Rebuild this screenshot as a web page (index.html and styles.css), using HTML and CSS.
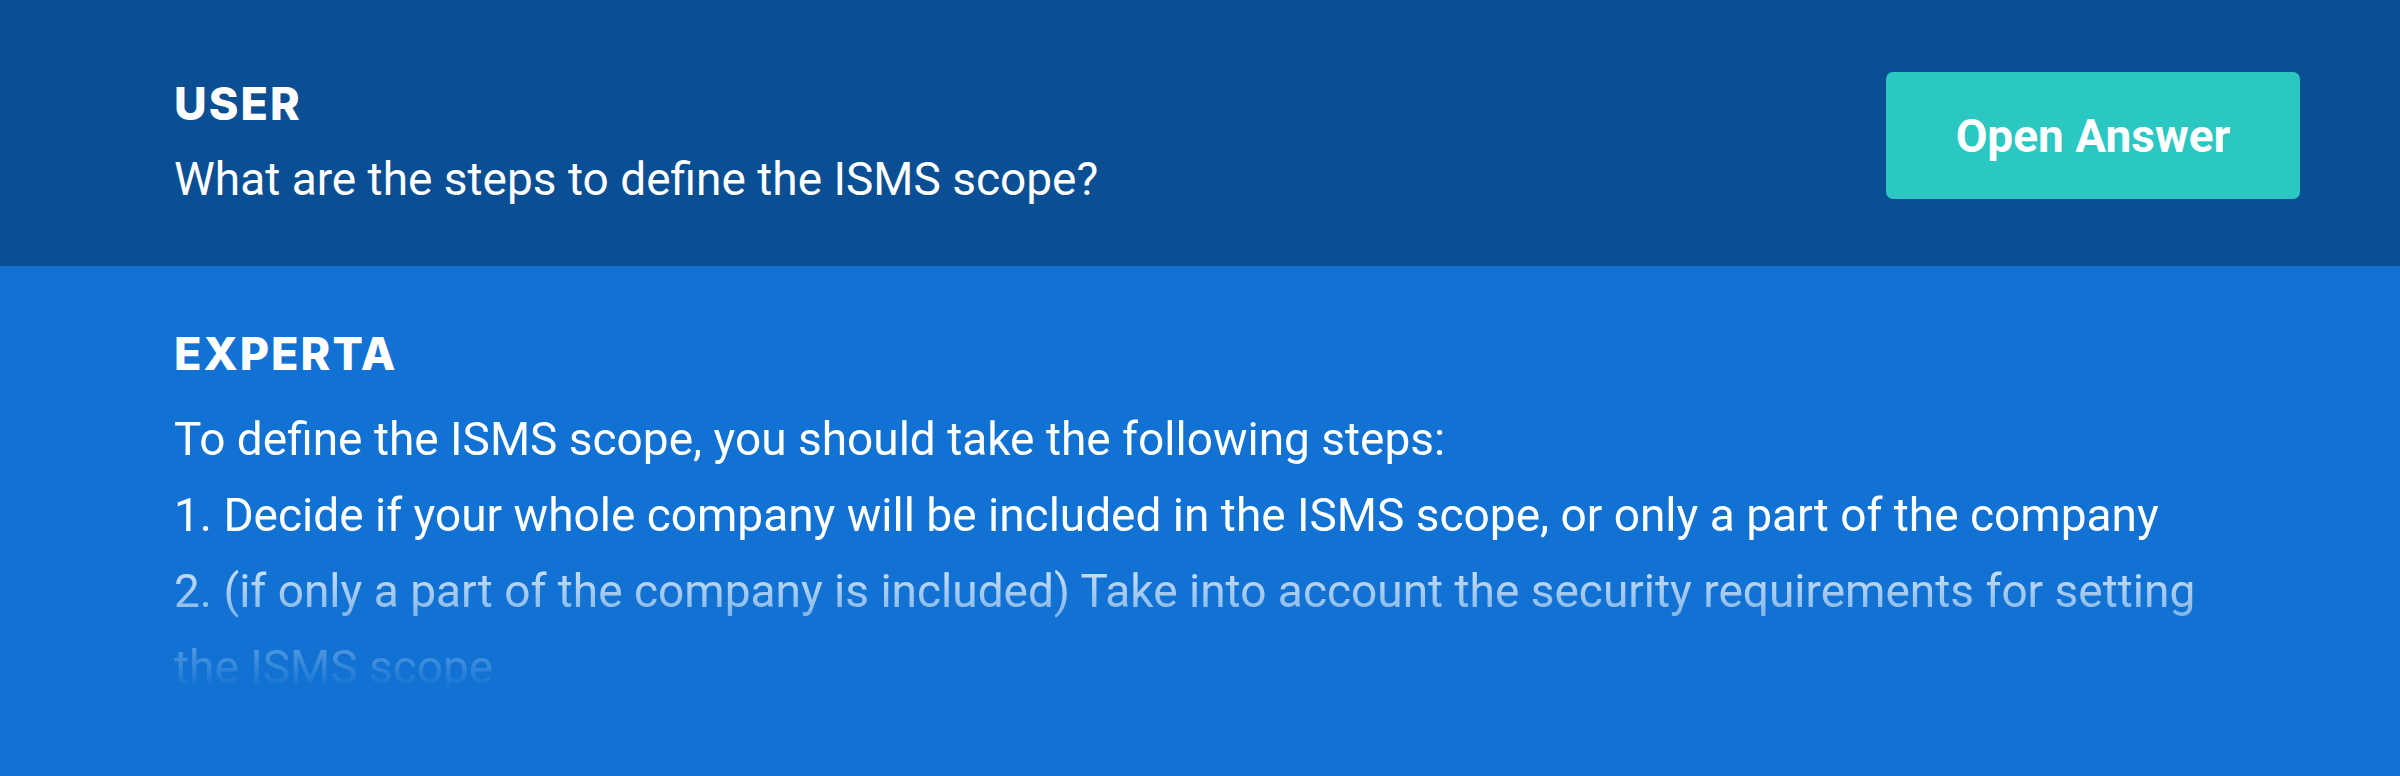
FILE: index.html
```html
<!DOCTYPE html>
<html lang="en">
<head>
<meta charset="utf-8">
<title>ISMS scope</title>
<link rel="stylesheet" href="styles.css">
</head>
<body>
<section class="question">
  <div class="who">
    <div class="label">USER</div>
    <p class="q-text">What are the steps to define the ISMS scope?</p>
  </div>
  <button class="open-btn" type="button">Open Answer</button>
</section>
<section class="answer">
  <div class="label">EXPERTA</div>
  <div class="a-text">
    <p>To define the ISMS scope, you should take the following steps:</p>
    <p>1. Decide if your whole company will be included in the ISMS scope, or only a part of the company</p>
    <p>2. (if only a part of the company is included) Take into account the security requirements for setting the ISMS scope</p>
  </div>
</section>
</body>
</html>
```

FILE: styles.css
```css
html, body {
  margin: 0;
  padding: 0;
}
body {
  width: 2400px;
  height: 776px;
  overflow: hidden;
  background: #1172d4;
  color: #ffffff;
  font-family: Roboto, "Liberation Sans", sans-serif;
}
p {
  margin: 0;
}
.label {
  font-family: Inter, "Open Sans", sans-serif;
  font-weight: 800;
  font-size: 45px;
  line-height: 54px;
  letter-spacing: 0.045em;
}
.question {
  box-sizing: border-box;
  height: 266px;
  background: #0a4e93;
  display: flex;
  justify-content: space-between;
  align-items: flex-start;
  padding: 72px 100px 0 174px;
}
.who {
  margin-top: 5px;
  display: flex;
  flex-direction: column;
  gap: 20px;
}
.q-text {
  font-size: 46px;
  line-height: 56px;
}
.open-btn {
  box-sizing: border-box;
  width: 414px;
  height: 127px;
  border: 0;
  border-radius: 7px;
  background: #2ac7c3;
  color: #ffffff;
  font-family: Roboto, "Liberation Sans", sans-serif;
  font-weight: 700;
  font-size: 46px;
  padding: 0;
  cursor: pointer;
}
.answer {
  box-sizing: border-box;
  height: 510px;
  padding: 61px 174px 0 174px;
  display: flex;
  flex-direction: column;
  gap: 20px;
}
.a-text {
  font-size: 46px;
  line-height: 76px;
  -webkit-mask-image: linear-gradient(to bottom, #000 134px, transparent 289px);
  mask-image: linear-gradient(to bottom, #000 134px, transparent 289px);
}
```
